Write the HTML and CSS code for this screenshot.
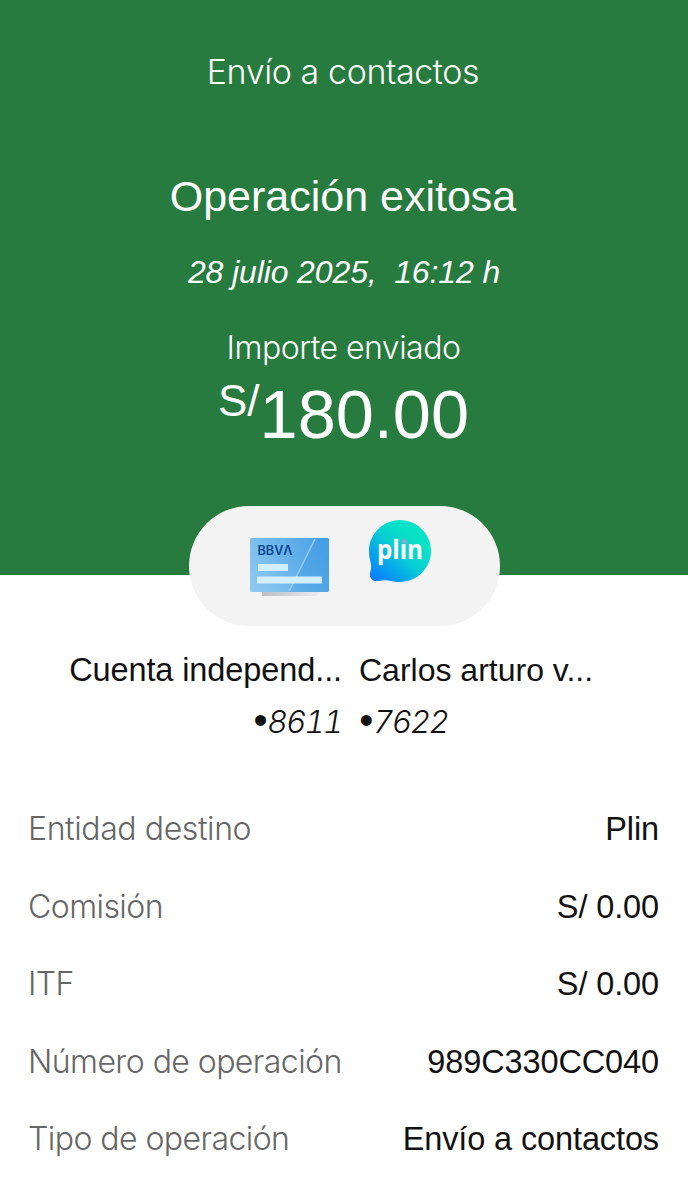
FILE: index.html
```html
<!DOCTYPE html>
<html lang="es">
<head>
<meta charset="utf-8">
<title>Envío a contactos</title>
<link rel="stylesheet" href="styles.css">
</head>
<body>
<main class="receipt">
  <header class="hero">
    <p class="hero-title">Envío a contactos</p>
    <h1 class="hero-status">Operación exitosa</h1>
    <p class="hero-date">28 julio 2025,&nbsp; 16:12 h</p>
    <p class="hero-label">Importe enviado</p>
    <p class="hero-amount"><span class="currency">S/</span><span>180.00</span></p>
  </header>
  <div class="pill">
    <svg class="icon-card" width="82" height="62" viewBox="0 0 82 62">
      <defs>
        <linearGradient id="card" x1="0" y1="1" x2="1" y2=".4">
          <stop offset="0" stop-color="#8fc9f0"/><stop offset=".55" stop-color="#58aae7"/><stop offset="1" stop-color="#48a0e4"/>
        </linearGradient>
        <linearGradient id="shade" x1="0" x2="1"><stop offset="0" stop-color="#bdbec1"/><stop offset="1" stop-color="#f0f0f1"/></linearGradient>
        <linearGradient id="shine" x1="1" y1="0" x2="0" y2="0"><stop offset="0" stop-color="#8fc9f2" stop-opacity=".1"/><stop offset="1" stop-color="#8fc9f2" stop-opacity=".6"/></linearGradient>
      </defs>
      <path d="M14 54h62l-8 6H14z" fill="url(#shade)"/>
      <rect x="2" y="2" width="79" height="54" rx="1.5" fill="url(#card)"/>
      <path d="M3.5 2H67L41 56H3.500Q2 56 2 54.500V3.500Q2 2 3.500 2z" fill="url(#shine)"/>
      <path d="M67 3L41 55.500" stroke="#94cbf3" stroke-width="1.600"/>
      <text class="bbva" x="9.500" y="19.300" textLength="35" lengthAdjust="spacingAndGlyphs">BBVΛ</text>
      <path d="M10 28h30v7H10zM9 40.500h65v7H9z" fill="#d3eeff"/>
    </svg>
    <svg class="icon-plin" width="66" height="66" viewBox="0 0 66 66">
      <defs>
        <linearGradient id="bubble" x1=".05" y1=".95" x2=".7" y2=".25">
          <stop offset="0" stop-color="#087cff"/><stop offset=".3" stop-color="#08a0ef"/><stop offset=".68" stop-color="#08d1d0"/><stop offset="1" stop-color="#08e2c6"/>
        </linearGradient>
      </defs>
      <path d="M33 2C50 2 64 16 64 33S50 64 33 64C23 64 22 61.500 15 62.500C10 63.500 7 63.500 4.500 61C2 58 3 55 4 51C5 46 2 42 2 33C2 16 16 2 33 2z" fill="url(#bubble)"/>
      <text class="plin" x="10" y="41" textLength="46" lengthAdjust="spacingAndGlyphs">plın</text>
      <circle cx="37.300" cy="23.500" r="2.300" fill="#a79ad9"/>
    </svg>
  </div>
  <section class="parties">
    <div class="party party-from"><p class="name">Cuenta independ...</p><p class="number"><span class="bullet">•</span>8611</p></div>
    <div class="party party-to"><p class="name">Carlos arturo v...</p><p class="number"><span class="bullet">•</span>7622</p></div>
  </section>
  <dl class="details">
    <div class="row"><dt>Entidad destino</dt><dd>Plin</dd></div>
    <div class="row"><dt>Comisión</dt><dd>S/ 0.00</dd></div>
    <div class="row"><dt>ITF</dt><dd>S/ 0.00</dd></div>
    <div class="row"><dt>Número de operación</dt><dd>989C330CC040</dd></div>
    <div class="row"><dt>Tipo de operación</dt><dd>Envío a contactos</dd></div>
  </dl>
</main>
</body>
</html>
```
FILE: styles.css
```css
* { box-sizing: border-box; }
body, p, h1, dl, dd { margin: 0; }
body {
  background: #fff;
  color: #111;
  font-family: "Liberation Sans", Arial, sans-serif;
}
.receipt { width: 688px; height: 1200px; overflow: hidden; white-space: nowrap; }
.hero {
  height: 575px;
  padding-top: 42px;
  background: #277b3e;
  color: #fff;
  text-align: center;
}
.hero-title, .hero-label, .number, dt { font-family: Inter, "Liberation Sans", sans-serif; font-weight: 300; }
.hero-title { padding-right: 2px; font-size: 34px; line-height: 60px; letter-spacing: -0.400px; }
.hero-status { margin-top: 64px; padding-right: 2px; font-size: 43px; font-weight: 400; line-height: 60px; }
.hero-date { margin-top: 21px; font-size: 32px; font-style: italic; line-height: 50px; letter-spacing: -0.120px; }
.hero-label { margin-top: 26px; padding-right: 1px; font-size: 32px; line-height: 50px; letter-spacing: -0.500px; }
.hero-amount {
  display: flex;
  justify-content: center;
  margin-top: 2px;
  padding-right: 1px;
  font-size: 68.500px;
  line-height: 80px;
}
.currency { font-size: 44px; line-height: 52px; }
.pill {
  position: relative;
  display: flex;
  gap: 37px;
  width: 311px;
  height: 120px;
  margin: -69px auto 0;
  padding: 12px 0 0 59px;
  border-radius: 60px;
  background: #f3f3f3;
}
.icon-card { margin-top: 18px; }
.bbva { font: 600 12.500px Inter, sans-serif; fill: #07458c; }
.plin { font: 700 27px "Open Sans", sans-serif; fill: #fff; }
.parties { display: grid; grid-template-columns: 342px 1fr; column-gap: 17px; padding-top: 19px; }
.party-from { text-align: right; }
.name { font-size: 32.500px; line-height: 50px; letter-spacing: -0.100px; }
.party-to .name { font-size: 32px; letter-spacing: 0; }
.number {
  margin-top: 2px;
  font-size: 31.500px;
  font-style: italic;
  font-variant-numeric: tabular-nums;
  letter-spacing: -1.700px;
  line-height: 50px;
}
.bullet {
  font-family: "Liberation Sans", Arial, sans-serif;
  font-size: 40px;
  line-height: 1;
  letter-spacing: 0;
  vertical-align: -1px;
}
.party-from .number { padding-left: 2px; }
.details { padding: 44px 29px 0 28px; }
.row { display: flex; justify-content: space-between; height: 77.500px; line-height: 77.500px; }
dt { margin-top: -1px; color: #666; font-size: 32px; letter-spacing: -0.560px; }
.row:first-child dt { letter-spacing: -0.400px; }
dd { font-size: 32.500px; letter-spacing: -0.120px; }
```
